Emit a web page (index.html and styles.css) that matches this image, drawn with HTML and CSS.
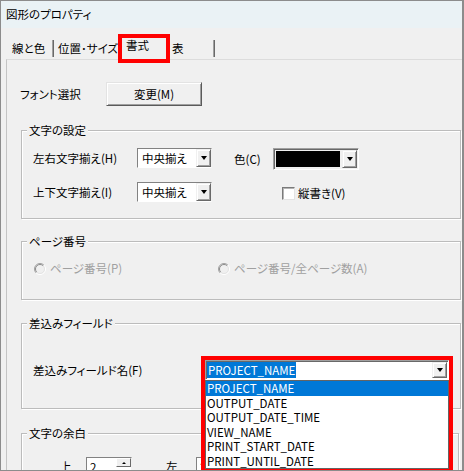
FILE: index.html
```html
<!DOCTYPE html>
<html lang="ja">
<head>
<meta charset="utf-8">
<title>図形のプロパティ</title>
<link rel="stylesheet" href="styles.css">
</head>
<body>
<div class="window">
  <div class="titlebar">図形のプロパティ</div>

  <div class="tabstrip">
    <span class="tab tab-line">線と色</span><span class="tab-sep"></span>
    <span class="tab tab-pos">位置･サイズ</span>
    <span class="tab tab-format current">書式<span class="mark mark-tab"></span></span>
    <span class="tab tab-table">表</span><span class="tab-sep"></span>
  </div>

  <div class="panel">
    <div class="font-row">
      <span class="font-label">フォント選択</span>
      <button class="btn" type="button">変更(M)</button>
    </div>

    <div class="group group-text">
      <div class="legend">文字の設定</div>
      <div class="row row-h">
        <span class="lbl">左右文字揃え(H)</span>
        <div class="select"><span class="val">中央揃え</span><span class="drop"></span></div>
        <span class="lbl-color">色(C)</span>
        <div class="colorbox"><span class="swatch"></span><span class="drop"></span></div>
      </div>
      <div class="row row-v">
        <span class="lbl">上下文字揃え(I)</span>
        <div class="select"><span class="val">中央揃え</span><span class="drop"></span></div>
        <span class="check"></span>
        <span class="check-text">縦書き(V)</span>
      </div>
    </div>

    <div class="group group-page">
      <div class="legend">ページ番号</div>
      <div class="row row-radio">
        <span class="radio-item radio-a">
          <svg class="radio" width="12" height="12" viewBox="0 0 12 12">
            <circle cx="6" cy="6" r="4.5" fill="#f0f0f0"/>
            <path d="M9.9 2.1A5.5 5.5 0 0 0 2.1 9.9" fill="none" stroke="#a0a0a0"/>
            <path d="M9.2 2.8A4.5 4.5 0 0 0 2.8 9.2" fill="none" stroke="#8c8c8c"/>
            <path d="M9.9 2.1A5.5 5.5 0 0 1 2.1 9.9" fill="none" stroke="#ffffff"/>
            <path d="M9.2 2.8A4.5 4.5 0 0 1 2.8 9.2" fill="none" stroke="#e3e3e3"/>
          </svg>
          <span class="disabled">ページ番号(P)</span>
        </span>
        <span class="radio-item radio-b">
          <svg class="radio" width="12" height="12" viewBox="0 0 12 12">
            <circle cx="6" cy="6" r="4.5" fill="#f0f0f0"/>
            <path d="M9.9 2.1A5.5 5.5 0 0 0 2.1 9.9" fill="none" stroke="#a0a0a0"/>
            <path d="M9.2 2.8A4.5 4.5 0 0 0 2.8 9.2" fill="none" stroke="#8c8c8c"/>
            <path d="M9.9 2.1A5.5 5.5 0 0 1 2.1 9.9" fill="none" stroke="#ffffff"/>
            <path d="M9.2 2.8A4.5 4.5 0 0 1 2.8 9.2" fill="none" stroke="#e3e3e3"/>
          </svg>
          <span class="disabled">ページ番号/全ページ数(A)</span>
        </span>
      </div>
    </div>

    <div class="group group-field">
      <div class="legend">差込みフィールド</div>
      <div class="row row-field">
        <span class="lbl lbl-field">差込みフィールド名(F)</span>
        <div class="combo">
          <span class="combo-val"><span class="sel-text">PROJECT_NAME</span></span>
          <span class="drop"></span>
          <ul class="droplist">
            <li class="item active">PROJECT_NAME</li>
            <li class="item">OUTPUT_DATE</li>
            <li class="item">OUTPUT_DATE_TIME</li>
            <li class="item">VIEW_NAME</li>
            <li class="item">PRINT_START_DATE</li>
            <li class="item">PRINT_UNTIL_DATE</li>
          </ul>
          <span class="mark mark-combo"></span>
        </div>
      </div>
    </div>

    <div class="group group-margin">
      <div class="legend">文字の余白</div>
      <div class="row row-margin">
        <span class="lbl-top">上</span>
        <div class="spin"><span class="spin-val">2</span><span class="spin-btn"></span></div>
        <span class="lbl-left">左</span>
        <div class="spin"><span class="spin-val">2</span><span class="spin-btn"></span></div>
      </div>
    </div>
  </div>
</div>
</body>
</html>
```

FILE: styles.css
```css
* {
  box-sizing: border-box;
}

html,
body {
  margin: 0;
  padding: 0;
  background: #f0f0f0;
}

body {
  font-family: "Noto Sans CJK JP", "Noto Sans", sans-serif;
  font-size: 11.5px;
  font-feature-settings: "palt";
  color: #000;
}

.window {
  width: 464px;
  height: 471px;
  border: 1px solid #8c8c8c;
  border-right-width: 2px;
  background: #f0f0f0;
  overflow: hidden;
}

/* caption */
.titlebar {
  height: 27px;
  line-height: 27px;
  padding-left: 5px;
  background: #eaf2f5;
}

/* tab strip */
.tabstrip {
  height: 31px;
  padding: 12px 0 0 11px;
  display: flex;
  align-items: flex-start;
}

.tab {
  height: 17px;
  line-height: 17px;
  white-space: nowrap;
}

.tab-line {
  width: 40px;
}

.tab-pos {
  width: 60px;
  margin-left: 4px;
}

.tab-format {
  width: 46px;
  margin-left: 8px;
  margin-top: -3px;
  position: relative;
}

.tab-table {
  width: 41px;
}

.tab-sep {
  width: 2px;
  height: 17px;
  border-left: 1px solid #a0a0a0;
  border-right: 1px solid #696969;
}

.mark {
  position: absolute;
  border: 4px solid #ff0000;
  pointer-events: none;
}

.mark-tab {
  left: -8px;
  top: -3px;
  width: 52px;
  height: 29px;
}

/* page body */
.panel {
  margin-left: 5px;
  height: 420px;
  border-left: 1px solid #c4c4c4;
  border-top: 1px solid #dcdcdc;
}

.font-row {
  margin-top: 22px;
  height: 24px;
  display: flex;
  align-items: center;
}

.font-label {
  width: 99px;
  padding-left: 13px;
}

.btn {
  width: 96px;
  height: 24px;
  padding: 0;
  font: inherit;
  color: #000;
  background: #f0f0f0;
  border: 1px solid;
  border-color: #e3e3e3 #5a5a5a #5a5a5a #e3e3e3;
  box-shadow: inset 1px 1px 0 #fff, inset -1px -1px 0 #a0a0a0;
}

/* group boxes */
.group {
  margin-left: 14px;
  width: 440px;
  border: 1px solid #bcbcbc;
  box-shadow: inset 1px 1px 0 #fff, 1px 1px 0 #fff;
}

.legend {
  display: table;
  margin: -8px 0 0 5px;
  padding: 0 2px;
  height: 15px;
  line-height: 15px;
  background: #f0f0f0;
}

.group-text {
  margin-top: 24px;
  height: 89px;
}

.group-page {
  margin-top: 22px;
  height: 59px;
}

.group-field {
  margin-top: 23px;
  height: 86px;
}

.group-margin {
  margin-top: 24px;
  width: 438px;
  height: 80px;
}

.row {
  display: flex;
  align-items: flex-start;
  padding-left: 11px;
}

.row-h {
  margin-top: 10px;
  height: 22px;
}

.row-v {
  margin-top: 12px;
  height: 20px;
}

.lbl {
  width: 104px;
  line-height: 20px;
  white-space: nowrap;
}

/* drop-down lists */
.select {
  width: 75px;
  height: 20px;
  display: flex;
  background: #fff;
  border: 1px solid;
  border-color: #828282 #f0f0f0 #ffffff #828282;
}

.val {
  flex: 1;
  padding-left: 4px;
  line-height: 18px;
  white-space: nowrap;
}

.drop {
  width: 15px;
  height: 100%;
  display: flex;
  align-items: center;
  justify-content: center;
  background: #f0f0f0;
  border: 1px solid;
  border-color: #f0f0f0 #696969 #696969 #f0f0f0;
  box-shadow: inset 1px 1px 0 #fff, inset -1px -1px 0 #a0a0a0;
}

.drop::after {
  content: "";
  border-left: 3px solid transparent;
  border-right: 3px solid transparent;
  border-top: 4px solid #000;
}

.lbl-color {
  margin-left: 22px;
  width: 39px;
  line-height: 22px;
}

.colorbox {
  width: 86px;
  height: 22px;
  display: flex;
  padding: 1px;
  background: #f0f0f0;
  border: 1px solid;
  border-color: #a0a0a0 #ffffff #ffffff #a0a0a0;
  box-shadow: inset 1px 1px 0 #696969;
}

.swatch {
  flex: 1;
  margin: 1px 2px 1px 1px;
  background: #000;
}

.colorbox .drop {
  height: 18px;
}

.check {
  margin: 5px 0 0 70px;
  width: 13px;
  height: 13px;
  background: #fff;
  border: 1px solid;
  border-color: #7a7a7a #e3e3e3 #e3e3e3 #7a7a7a;
  box-shadow: inset 1px 1px 0 #b4b4b4;
}

.check-text {
  margin-left: 3px;
  line-height: 22px;
}

/* radio buttons (disabled) */
.row-radio {
  margin-top: 12px;
  padding-left: 12px;
  height: 15px;
}

.radio-item {
  display: flex;
  align-items: center;
  height: 15px;
  line-height: 15px;
}

.radio {
  margin-right: 4px;
  flex: none;
}

.radio-a {
  width: 184px;
}

.disabled {
  color: #a0a0a0;
}

/* merge field combo */
.row-field {
  margin-top: 29px;
  height: 20px;
}

.lbl-field {
  width: 172px;
}

.combo {
  position: relative;
  width: 244px;
  height: 20px;
  display: flex;
  padding: 1px;
  background: #fff;
  border: 1px solid;
  border-color: #a0a0a0 #ffffff #ffffff #a0a0a0;
  box-shadow: inset 1px 1px 0 #696969;
}

.combo-val {
  flex: 1;
  line-height: 16px;
  padding-left: 0;
}

.sel-text {
  display: inline-block;
  padding: 0 1px;
  color: #fff;
  background: #0078d7;
}

.combo .drop {
  height: 16px;
}

.droplist {
  position: absolute;
  left: -1px;
  top: 19px;
  width: 244px;
  height: 89px;
  margin: 0;
  padding: 0;
  list-style: none;
  background: #fff;
  border: 1px solid #646464;
  z-index: 1;
}

.item {
  height: 14.6px;
  line-height: 14.6px;
  padding-left: 1px;
  white-space: nowrap;
}

.item.active {
  color: #fff;
  background: #0078d7;
}

.mark-combo {
  left: -5px;
  top: -5px;
  width: 252px;
  height: 117px;
  z-index: 2;
}

/* text margins */
.row-margin {
  margin-top: 16px;
  padding-left: 38px;
  height: 18px;
}

.lbl-top,
.lbl-left {
  line-height: 18px;
}

.lbl-top {
  width: 26px;
}

.lbl-left {
  margin-left: 34px;
  width: 30px;
}

.spin {
  width: 46px;
  height: 20px;
  display: flex;
  background: #fff;
  border: 1px solid;
  border-color: #828282 #f0f0f0 #ffffff #828282;
}

.spin-val {
  flex: 1;
  padding-left: 3px;
  line-height: 18px;
}

.spin-btn {
  width: 15px;
  height: 9px;
  display: flex;
  align-items: center;
  justify-content: center;
  background: #f0f0f0;
  border: 1px solid;
  border-color: #fff #696969 #696969 #fff;
}

.spin-btn::after {
  content: "";
  border-left: 2px solid transparent;
  border-right: 2px solid transparent;
  border-bottom: 2px solid #000;
}
```
